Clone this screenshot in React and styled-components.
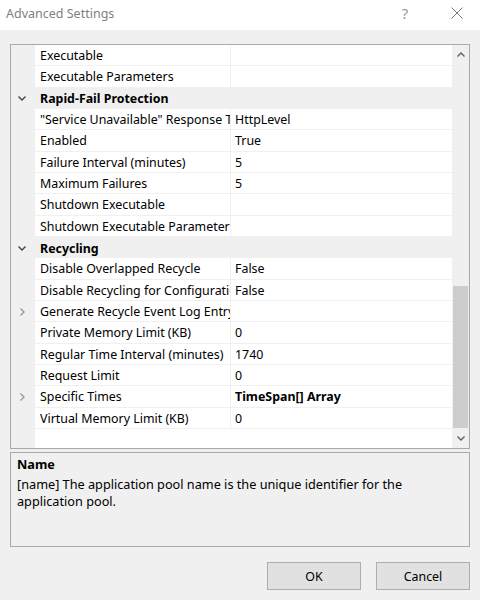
import styled, { createGlobalStyle } from 'styled-components';

const GlobalStyle = createGlobalStyle`
  html, body {
    margin: 0;
    padding: 0;
    background: #f0f0f0;
  }
  body {
    font-family: "Noto Sans", "Open Sans", sans-serif;
    font-size: 12.4px;
    color: #000;
  }
`;

const Window = styled.div`
  width: 480px;
  height: 600px;
  display: flex;
  flex-direction: column;
  background: #f0f0f0;
  overflow: hidden;
`;

const TitleBar = styled.div`
  height: 30px;
  flex: none;
  display: flex;
  align-items: center;
  background: #fff;
  padding-left: 6px;
`;

const Title = styled.div`
  flex: 1;
  font-size: 12.5px;
  color: #808080;
  margin-top: -4px;
`;

const TitleButton = styled.div`
  width: ${p => p.$w}px;
  height: 30px;
  display: flex;
  align-items: center;
  justify-content: center;
  color: #999;
  margin-top: -4px;
`;

const Body = styled.div`
  flex: 1;
  display: flex;
  flex-direction: column;
  padding: 14px 10px 0 10px;
`;

const Grid = styled.div`
  height: 403px;
  border: 1px solid #a9a9a9;
  background: #fff;
  display: flex;
  flex: none;
`;

const Rows = styled.div`
  flex: 1;
  display: flex;
  flex-direction: column;
  background: linear-gradient(to right, #f0f0f0 0 24px, #fff 24px);
`;

const Row = styled.div`
  height: 21.33px;
  flex: none;
  display: grid;
  grid-template-columns: 24px 196px 1fr;
  align-items: center;
  box-sizing: border-box;
  background: ${p => (p.$category ? '#f0f0f0' : 'transparent')};
  font-weight: ${p => (p.$category ? 700 : 400)};
`;

const Margin = styled.div`
  height: 100%;
  display: flex;
  align-items: center;
  justify-content: center;
  padding-right: 2px;
`;

const Name = styled.div`
  height: 100%;
  display: flex;
  align-items: center;
  padding: 1px 0 0 5px;
  white-space: nowrap;
  overflow: hidden;
  border-bottom: ${p => (p.$category ? 'none' : '1px solid #f0f0f0')};
  border-right: ${p => (p.$category ? 'none' : '1px solid #f0f0f0')};
  box-sizing: border-box;
  grid-column: ${p => (p.$category ? '2 / 4' : 'auto')};
`;

const Value = styled.div`
  height: 100%;
  display: flex;
  align-items: center;
  padding: 1px 0 0 4px;
  white-space: nowrap;
  overflow: hidden;
  border-bottom: 1px solid #f0f0f0;
  box-sizing: border-box;
  font-weight: ${p => (p.$bold ? 700 : 400)};
`;

const ScrollBar = styled.div`
  width: 17px;
  flex: none;
  background: #f0f0f0;
  display: flex;
  flex-direction: column;
`;

const ScrollArrow = styled.div`
  height: 20px;
  display: flex;
  align-items: center;
  justify-content: center;
`;

const ScrollTrack = styled.div`
  flex: 1;
  display: flex;
  flex-direction: column;
  justify-content: flex-end;
`;

const Thumb = styled.div`
  height: 142px;
  margin: 0 1px;
  background: #cdcdcd;
`;

const Description = styled.div`
  margin-top: 3px;
  height: 87px;
  flex: none;
  border: 1px solid #a9a9a9;
  padding: 3px 6px;
  font-size: 12.7px;
  line-height: 17px;
`;

const DescTitle = styled.div`
  font-weight: 700;
  margin-bottom: 3px;
`;

const Buttons = styled.div`
  display: flex;
  justify-content: flex-end;
  gap: 15px;
  margin-top: 15px;
`;

const Button = styled.button`
  width: 94px;
  height: 28px;
  border: 1px solid #adadad;
  background: #e1e1e1;
  font-family: inherit;
  font-size: 12.4px;
  color: #000;
  padding: 0;
`;

const Chevron = ({ dir, color = '#555' }) => {
  const paths = {
    down: 'M1.5 3.5 L5 7 L8.5 3.5',
    up: 'M1.5 6.5 L5 3 L8.5 6.5',
    right: 'M3.5 1.5 L7 5 L3.5 8.5',
  };
  return (
    <svg width="10" height="10" viewBox="0 0 10 10">
      <path d={paths[dir]} fill="none" stroke={color} strokeWidth="1.4" />
    </svg>
  );
};

const rows = [
  { name: 'Executable', value: '' },
  { name: 'Executable Parameters', value: '' },
  { category: true, name: 'Rapid-Fail Protection' },
  { name: '"Service Unavailable" Response Type', value: 'HttpLevel' },
  { name: 'Enabled', value: 'True' },
  { name: 'Failure Interval (minutes)', value: '5' },
  { name: 'Maximum Failures', value: '5' },
  { name: 'Shutdown Executable', value: '' },
  { name: 'Shutdown Executable Parameters', value: '' },
  { category: true, name: 'Recycling' },
  { name: 'Disable Overlapped Recycle', value: 'False' },
  { name: 'Disable Recycling for Configuration Changes', value: 'False' },
  { name: 'Generate Recycle Event Log Entry', value: '', expandable: true },
  { name: 'Private Memory Limit (KB)', value: '0' },
  { name: 'Regular Time Interval (minutes)', value: '1740' },
  { name: 'Request Limit', value: '0' },
  { name: 'Specific Times', value: 'TimeSpan[] Array', expandable: true, bold: true },
  { name: 'Virtual Memory Limit (KB)', value: '0' },
];

export default function App() {
  return (
    <Window>
      <GlobalStyle />
      <TitleBar>
        <Title>Advanced Settings</Title>
        <TitleButton $w={58}>
          <span style={{ fontSize: 15 }}>?</span>
        </TitleButton>
        <TitleButton $w={46}>
          <svg width="12" height="12" viewBox="0 0 12 12">
            <path d="M0.5 0.5 L11.5 11.5 M11.5 0.5 L0.5 11.5" stroke="#777" strokeWidth="1" />
          </svg>
        </TitleButton>
      </TitleBar>
      <Body>
        <Grid>
          <Rows>
            {rows.map(r =>
              r.category ? (
                <Row key={r.name} $category>
                  <Margin>
                    <Chevron dir="down" color="#444" />
                  </Margin>
                  <Name $category>{r.name}</Name>
                </Row>
              ) : (
                <Row key={r.name}>
                  <Margin>{r.expandable && <Chevron dir="right" color="#999" />}</Margin>
                  <Name>{r.name}</Name>
                  <Value $bold={r.bold}>{r.value}</Value>
                </Row>
              )
            )}
          </Rows>
          <ScrollBar>
            <ScrollArrow>
              <Chevron dir="up" color="#606060" />
            </ScrollArrow>
            <ScrollTrack>
              <Thumb />
            </ScrollTrack>
            <ScrollArrow>
              <Chevron dir="down" color="#606060" />
            </ScrollArrow>
          </ScrollBar>
        </Grid>
        <Description>
          <DescTitle>Name</DescTitle>
          <div>[name] The application pool name is the unique identifier for the application pool.</div>
        </Description>
        <Buttons>
          <Button>OK</Button>
          <Button>Cancel</Button>
        </Buttons>
      </Body>
    </Window>
  );
}
